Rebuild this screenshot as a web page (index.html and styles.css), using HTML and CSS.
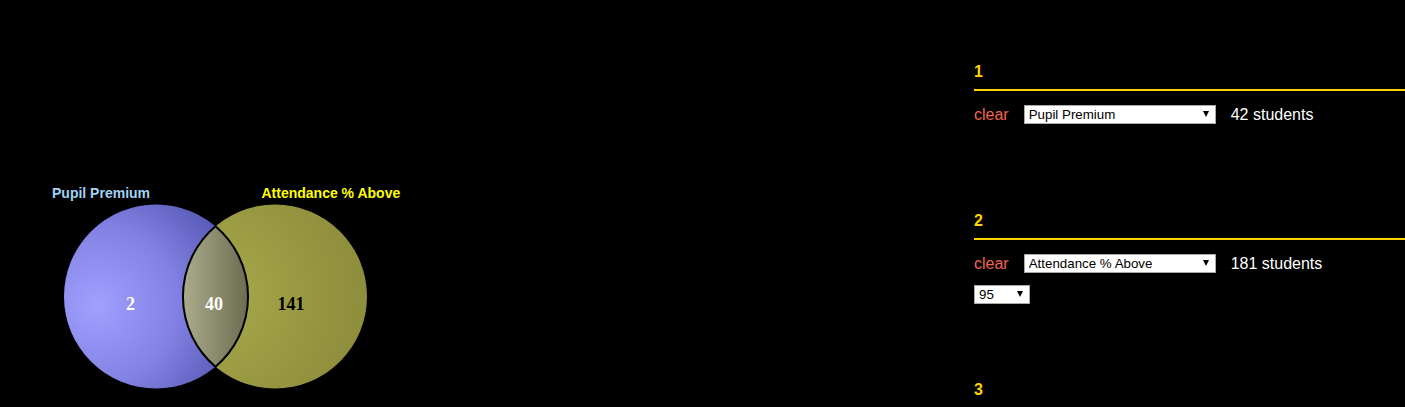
FILE: index.html
```html
<!DOCTYPE html>
<html>
<head>
<meta charset="utf-8">
<link rel="stylesheet" href="styles.css">
</head>
<body>
<div class="page">
  <div class="chart">
    <svg class="venn" width="420" height="407" viewBox="0 0 420 407">
      <defs>
        <radialGradient id="gL" cx="0.18" cy="0.55" r="0.95">
          <stop offset="0" stop-color="#a0a0ff"/>
          <stop offset="0.45" stop-color="#8282e4"/>
          <stop offset="1" stop-color="#4444a0"/>
        </radialGradient>
        <radialGradient id="gR" cx="0.15" cy="0.5" r="0.95">
          <stop offset="0" stop-color="#a9a94b"/>
          <stop offset="1" stop-color="#8a8a3a"/>
        </radialGradient>
        <linearGradient id="gI" x1="0" y1="0" x2="1" y2="0">
          <stop offset="0" stop-color="#abab8d"/>
          <stop offset="1" stop-color="#6c6c50"/>
        </linearGradient>
      </defs>
      <circle cx="156" cy="296.5" r="92" fill="url(#gL)"/>
      <circle cx="275" cy="296.5" r="92" fill="url(#gR)"/>
      <path d="M215.5 226.3 A92 92 0 0 0 215.5 366.7 A92 92 0 0 0 215.5 226.3 Z" fill="url(#gI)" stroke="#000" stroke-width="2"/>
      <text class="lbl lbl-a" x="52" y="198">Pupil Premium</text>
      <text class="lbl lbl-b" x="261.5" y="198">Attendance % Above</text>
      <text class="num num-w" x="130.5" y="310" text-anchor="middle">2</text>
      <text class="num num-w" x="214" y="310" text-anchor="middle">40</text>
      <text class="num num-k" x="291" y="310" text-anchor="middle">141</text>
    </svg>
  </div>
  <div class="panel">
    <div class="section">
      <div class="head">1</div>
      <div class="row">
        <span class="clear">clear</span>
        <span class="pick pick-wide"><select><option>Pupil Premium</option></select></span>
        <span class="count">42 students</span>
      </div>
    </div>
    <div class="section">
      <div class="head">2</div>
      <div class="row">
        <span class="clear">clear</span>
        <span class="pick pick-wide"><select><option>Attendance % Above</option></select></span>
        <span class="count">181 students</span>
      </div>
      <div class="row sub">
        <span class="pick pick-small"><select><option>95</option></select></span>
      </div>
    </div>
    <div class="section">
      <div class="head">3</div>
    </div>
  </div>
</div>
</body>
</html>
```
FILE: styles.css
```css
html, body {
  margin: 0;
  padding: 0;
  background: #000;
}
body {
  font-family: "Liberation Sans", Arial, sans-serif;
  color: #fff;
  overflow: hidden;
}
.page {
  display: flex;
  width: 1405px;
  height: 407px;
  overflow: hidden;
}
.chart {
  width: 974px;
  flex: none;
}
.venn {
  display: block;
}
.lbl {
  font-family: "Liberation Sans", Arial, sans-serif;
  font-weight: bold;
  font-size: 14px;
}
.lbl-a { fill: #a2d2f4; }
.lbl-b { fill: #ffff00; }
.num {
  font-family: "Liberation Serif", "Times New Roman", serif;
  font-weight: bold;
  font-size: 18px;
}
.num-w { fill: #fff; }
.num-k { fill: #000; }
.panel {
  flex: 1;
  padding-top: 61px;
}
.section {
  box-sizing: border-box;
  min-height: 149px;
  padding-bottom: 75px;
}
.head {
  color: #ffd200;
  font-weight: bold;
  font-size: 16px;
  line-height: 18px;
  padding-top: 2px;
  padding-bottom: 8px;
  border-bottom: 2px solid #ffd200;
  margin-bottom: 14px;
}
.row {
  display: flex;
  align-items: center;
  gap: 15px;
  height: 19px;
}
.row.sub {
  margin-top: 12px;
}
.clear {
  color: #f4644f;
  font-size: 16px;
}
.count {
  font-size: 16px;
  color: #fff;
}
.pick {
  position: relative;
  display: block;
  height: 19px;
}
.pick select {
  appearance: none;
  -webkit-appearance: none;
  display: block;
  box-sizing: border-box;
  height: 19px;
  margin: 0;
  padding: 0 0 0 4px;
  border: 1px solid #a9a9a9;
  border-radius: 0;
  background: #fff;
  color: #000;
  font-family: "Liberation Sans", Arial, sans-serif;
  font-size: 13.33px;
  line-height: 17px;
}
.pick-wide select { width: 192px; }
.pick-small select { width: 56px; }
.pick::after {
  content: "";
  position: absolute;
  right: 7px;
  top: 6px;
  width: 0;
  height: 0;
  border-left: 3.5px solid transparent;
  border-right: 3.5px solid transparent;
  border-top: 6px solid #000;
  pointer-events: none;
}
```
